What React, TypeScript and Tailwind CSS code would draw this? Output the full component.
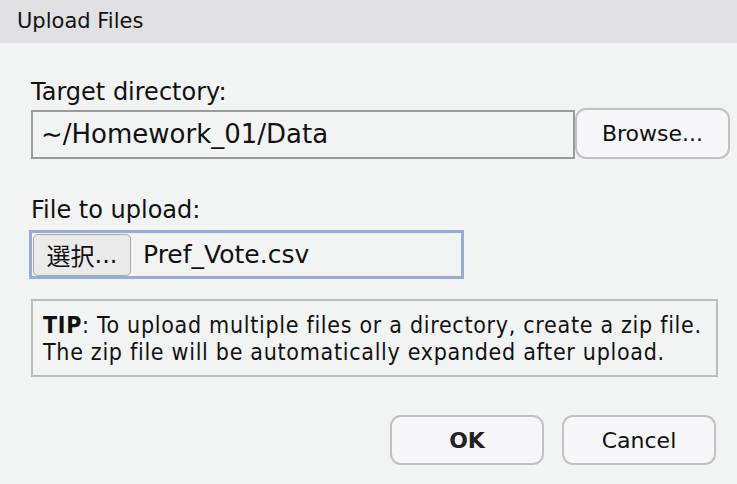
import React from "react";

export default function App() {
  return (
    <div className="w-[737px] h-[484px] bg-[#f2f3f3] font-['DejaVu_Sans',sans-serif] text-[#111] flex flex-col overflow-hidden">
      <div className="h-[43px] shrink-0 bg-[#e1e1e4] pl-[17px] flex items-center text-[21px] leading-none">
        Upload Files
      </div>
      <div className="flex flex-col pl-[31px] pt-[35px]">
        <div className="text-[24px] leading-[28px]">Target directory:</div>
        <div className="flex items-end mt-[2px]">
          <div className="w-[544px] h-[49px] border-2 border-[#9b9b9b] bg-[#f2f3f3] flex items-center pl-[8px] text-[26px]">
            ~/Homework_01/Data
          </div>
          <button className="w-[155px] h-[51px] rounded-[11px] border-2 border-[#c2c2c2] bg-[#f7f7f9] text-[22px] flex items-center justify-center">
            Browse...
          </button>
        </div>
        <div className="text-[24px] leading-[28px] mt-[37px]">File to upload:</div>
        <div className="mt-[6px] ml-[-2px] w-[435px] h-[49px] border-[3px] border-[#97acd8] flex items-center">
          <div className="ml-[1px] w-[98px] h-[42px] rounded-[5px] border border-[#a9a9a9] bg-[#ebebeb] flex items-center justify-center text-[24px]">
            <span className="font-['Noto_Sans_CJK_JP',sans-serif]">選択</span>...
          </div>
          <div className="ml-[12px] text-[25px]">Pref_Vote.csv</div>
        </div>
        <div className="mt-[20px] w-[687px] h-[78px] border-2 border-[#bdbdbd] pl-[10px] pt-[11px] text-[23px] leading-[27px] tracking-[0.7px] font-['DejaVu_Sans_Condensed','Liberation_Sans_Narrow',sans-serif]">
          <div className="whitespace-nowrap"><span className="font-bold">TIP</span>: To upload multiple files or a directory, create a zip file.</div>
          <div className="whitespace-nowrap">The zip file will be automatically expanded after upload.</div>
        </div>
        <div className="flex justify-end gap-[18px] mt-[38px] pr-[21px]">
          <button className="w-[154px] h-[50px] rounded-[11px] border-2 border-[#c2c2c2] bg-[#f7f7f9] text-[22px] font-bold text-[#222]">
            OK
          </button>
          <button className="w-[154px] h-[50px] rounded-[11px] border-2 border-[#c2c2c2] bg-[#f7f7f9] text-[22px]">
            Cancel
          </button>
        </div>
      </div>
    </div>
  );
}
